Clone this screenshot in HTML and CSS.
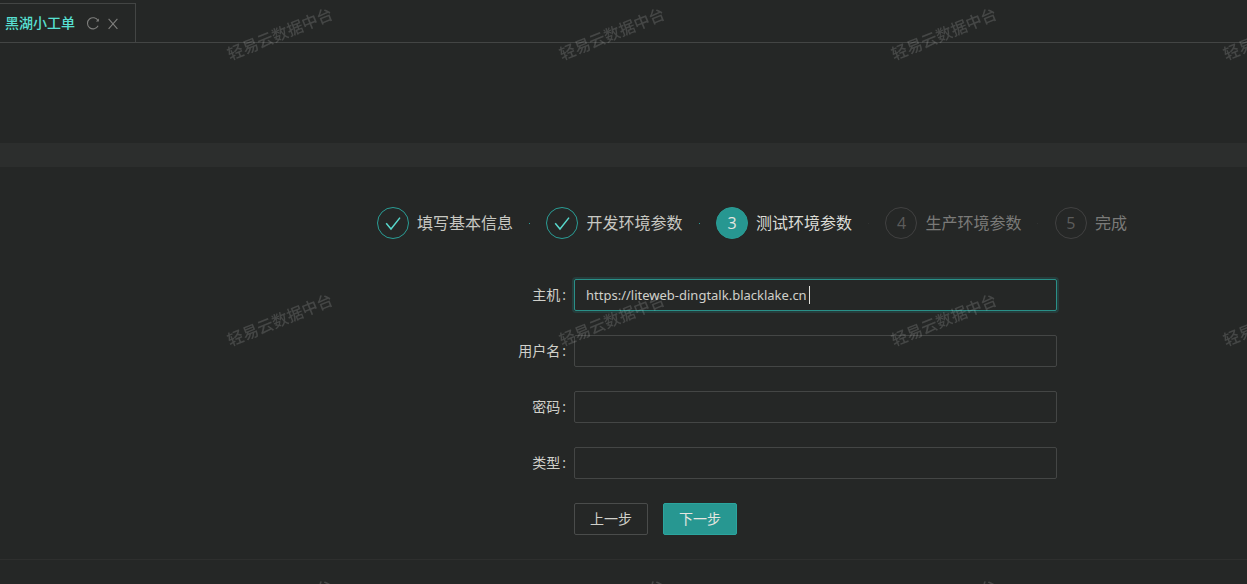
FILE: index.html
```html
<!DOCTYPE html>
<html lang="zh-CN">
<head>
<meta charset="utf-8">
<meta name="viewport" content="width=device-width, initial-scale=1">
<title>黑湖小工单</title>
<link rel="stylesheet" href="styles.css">
</head>
<body>
<header class="tabs">
  <div class="tab">
    <a class="tab-title" href="#">黑湖小工单</a>
    <button class="icon-button" type="button" aria-label="刷新">
      <svg width="14" height="14" viewBox="0 0 14 14" fill="none" stroke="currentColor" stroke-width="1.1"><path d="M12.1 9.8A5.6 5.6 0 1 1 12 4.6"/><path d="M12.9 2.6V5.6H9.9Z" fill="currentColor" stroke="none"/></svg>
    </button>
    <button class="icon-button" type="button" aria-label="关闭">
      <svg width="14" height="14" viewBox="0 0 14 14" fill="none" stroke="currentColor" stroke-width="1.1"><path d="M2.6 2.8L11.4 12.8M11.4 2.8L2.6 12.8"/></svg>
    </button>
  </div>
</header>
<main>
  <section class="summary"></section>
  <section class="panel">
    <ol class="steps">
      <li class="step done">
        <span class="step-icon"><svg width="16" height="16" viewBox="0 0 16 16" fill="none" stroke="currentColor" stroke-width="1.5"><path d="M1.2 8.3L6 14L15 2.6"/></svg></span>
        <span class="step-title">填写基本信息</span>
      </li>
      <li class="step done">
        <span class="step-icon"><svg width="16" height="16" viewBox="0 0 16 16" fill="none" stroke="currentColor" stroke-width="1.5"><path d="M1.2 8.3L6 14L15 2.6"/></svg></span>
        <span class="step-title">开发环境参数</span>
      </li>
      <li class="step current" aria-current="step"><span class="step-icon">3</span><span class="step-title">测试环境参数</span></li>
      <li class="step"><span class="step-icon">4</span><span class="step-title">生产环境参数</span></li>
      <li class="step"><span class="step-icon">5</span><span class="step-title">完成</span></li>
    </ol>
    <form class="form">
      <label class="label" for="host">主机</label>
      <div class="field">
        <input class="input focused" id="host" type="text" value="https://liteweb-dingtalk.blacklake.cn">
        <span class="caret"></span>
      </div>
      <label class="label" for="user">用户名</label>
      <input class="input" id="user" type="text">
      <label class="label" for="password">密码</label>
      <input class="input" id="password" type="password">
      <label class="label" for="type">类型</label>
      <input class="input" id="type" type="text">
      <div class="actions">
        <button class="button" type="button">上一步</button>
        <button class="button primary" type="submit">下一步</button>
      </div>
    </form>
  </section>
</main>
<div class="watermark" aria-hidden="true">
  <div class="watermark-grid">
    <span>轻易云数据中台</span><span>轻易云数据中台</span><span>轻易云数据中台</span><span>轻易云数据中台</span><span>轻易云数据中台</span>
    <span>轻易云数据中台</span><span>轻易云数据中台</span><span>轻易云数据中台</span><span>轻易云数据中台</span><span>轻易云数据中台</span>
    <span>轻易云数据中台</span><span>轻易云数据中台</span><span>轻易云数据中台</span><span>轻易云数据中台</span><span>轻易云数据中台</span>
  </div>
</div>
</body>
</html>
```

FILE: styles.css
```css
* {
  box-sizing: border-box;
}

body {
  margin: 0;
  background: #252726;
  color: #d0d0ca;
  font: 14px/22px "Open Sans", "Noto Sans CJK SC", sans-serif;
}

button,
input {
  font: inherit;
  color: inherit;
}

.tabs {
  display: flex;
  padding-top: 3px;
  border-bottom: 1px solid #434544;
}

.tab {
  display: flex;
  align-items: center;
  gap: 6px;
  height: 39px;
  padding: 0 15px 0 5px;
  border: 1px solid #434544;
  border-width: 1px 1px 0 0;
}

.tab-title {
  margin-right: 5px;
  color: #58e0d3;
  font-weight: 500;
  text-decoration: none;
}

.icon-button {
  display: flex;
  padding: 0;
  border: 0;
  background: none;
  color: #7e7e7c;
}

.summary {
  height: 124px;
  border-bottom: 24px solid #2c2e2d;
}

.panel {
  padding: 40px 0 24px;
  border-bottom: 1px solid #2e2f2e;
}

.steps {
  display: flex;
  justify-content: space-between;
  margin: 0 120px 40px 377px;
  padding: 0;
  list-style: none;
  font-size: 16px;
  line-height: 32px;
  color: #7a7a78;
}

.step {
  display: flex;
  align-items: center;
  gap: 8px;
  white-space: nowrap;
}

.step:not(:last-child)::after {
  content: "";
  width: 1px;
  height: 1px;
  margin-left: 8px;
  background: #303231;
}

.step.done::after {
  background: #2a9d95 !important;
}

.step-icon {
  display: flex;
  align-items: center;
  justify-content: center;
  width: 32px;
  height: 32px;
  border: 1px solid #414141;
  border-radius: 50%;
  color: #5c5c5b;
}

.done .step-icon {
  border-color: #2a9d95;
  color: #58d8cc;
}

.current .step-icon {
  border-color: #2a9d95;
  background: #279791;
  color: #e6e6e0;
}

.done .step-title {
  color: #c8c8c2;
}

.current .step-title {
  color: #dcdcd6;
}

.form {
  display: grid;
  grid-template-columns: 566px 1fr;
  gap: 24px 8px;
  align-items: center;
  margin-right: 190px;
}

.label {
  text-align: right;
}

.label::after {
  content: ":";
  margin-left: 2px;
}

.field {
  position: relative;
}

.input {
  display: block;
  width: 100%;
  height: 32px;
  padding: 4px 11px;
  border: 1px solid #444645;
  border-radius: 2px;
  outline: 0;
  background: transparent;
  font-family: "Noto Sans", "Noto Sans CJK SC", sans-serif;
  font-size: 13px;
}

.input.focused {
  border-color: #2a9088;
  box-shadow: 0 0 0 2px #253d3c;
}

.caret {
  position: absolute;
  top: 7px;
  left: 235px;
  width: 1px;
  height: 18px;
  background: #e0e0da;
}

.actions {
  display: flex;
  grid-column: 2;
  gap: 15px;
}

.button {
  height: 32px;
  padding: 0 15px;
  border: 1px solid #4a4c4b;
  border-radius: 2px;
  background: transparent;
}

.button.primary {
  border-color: #2ba59e;
  background: #279791;
  color: #e6e6e0;
}

.watermark {
  position: fixed;
  inset: 0;
  overflow: hidden;
  pointer-events: none;
}

.watermark-grid {
  position: absolute;
  top: -109px;
  left: -218px;
  display: grid;
  grid-template-columns: repeat(5, 332px);
  grid-auto-rows: 286px;
  place-items: center;
  color: rgba(255, 255, 255, 0.15);
  font-size: 16px;
  font-weight: 500;
}

.watermark-grid span {
  transform: rotate(-22deg);
}
```
